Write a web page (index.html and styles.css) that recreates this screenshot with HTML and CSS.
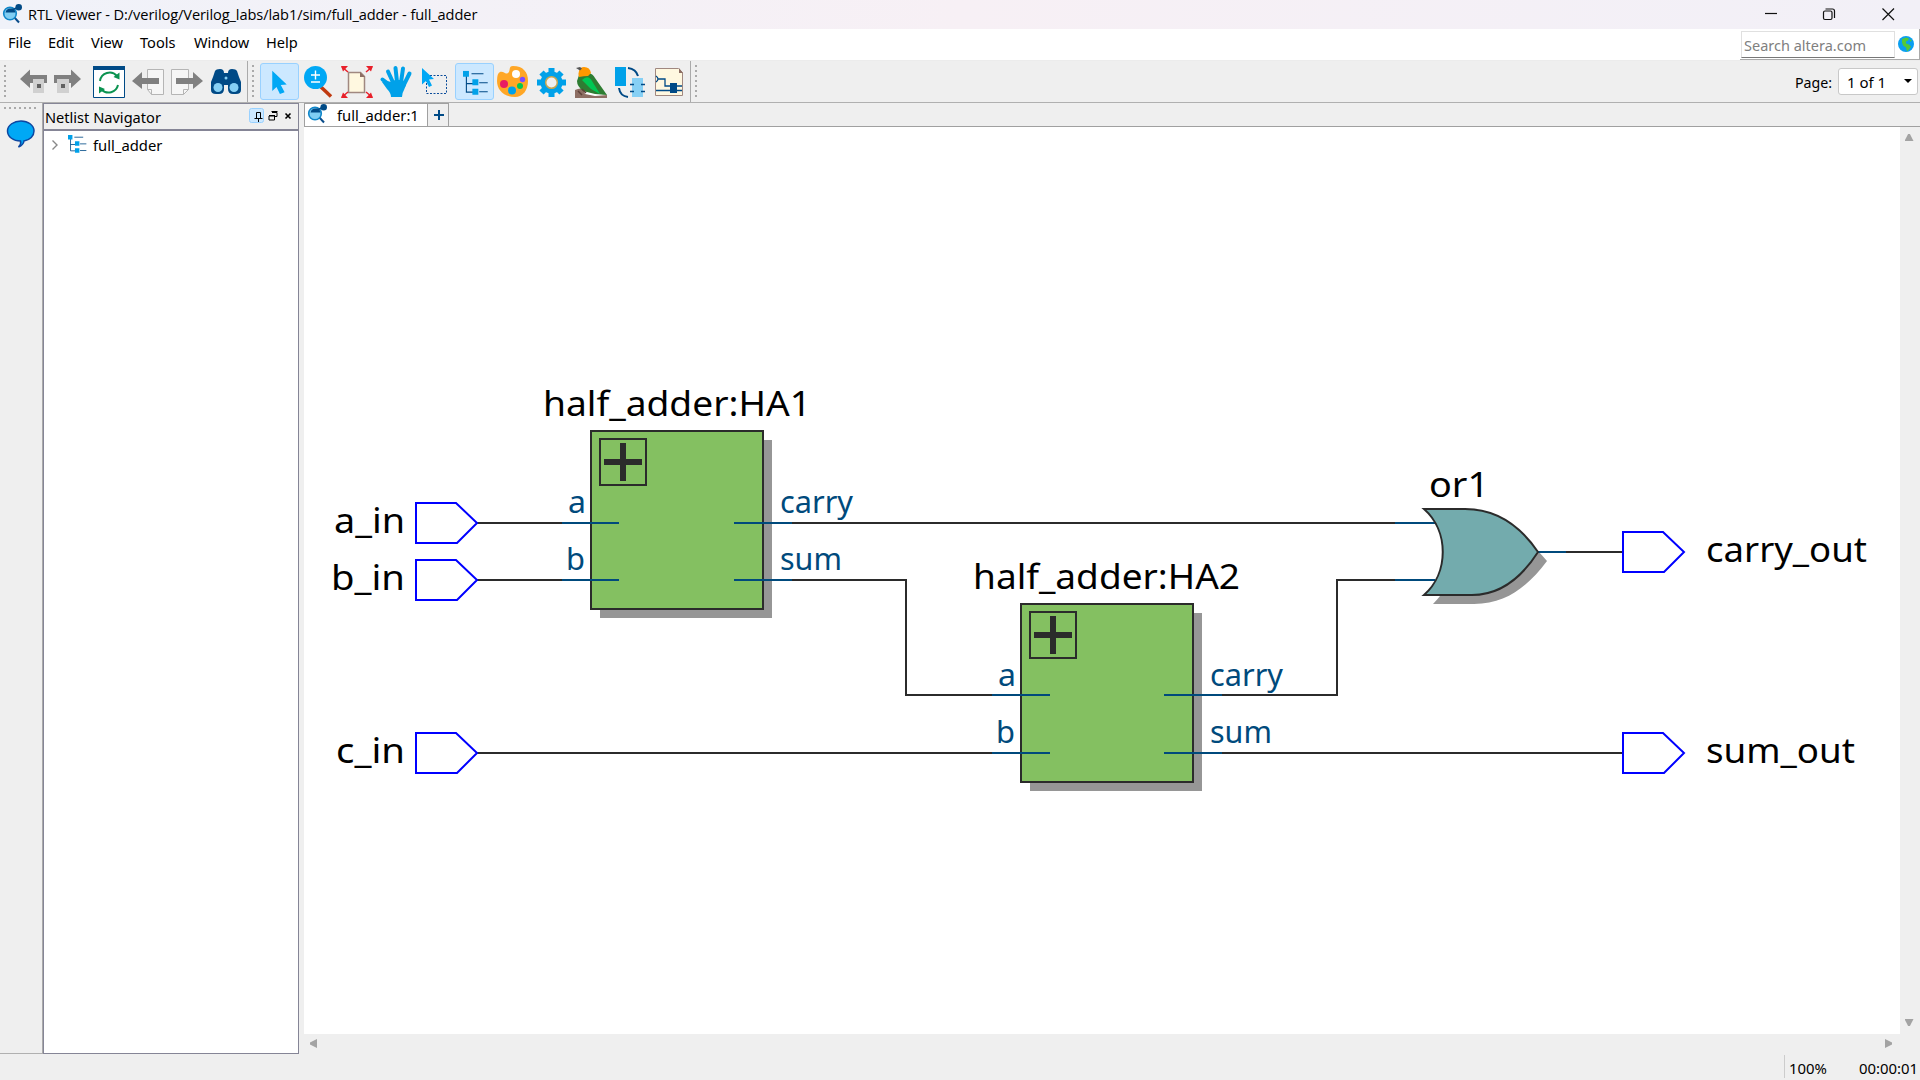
FILE: index.html
```html
<!DOCTYPE html>
<html lang="en">
<head>
<meta charset="utf-8">
<title>RTL Viewer</title>
<link rel="stylesheet" href="styles.css">
</head>
<body>
<svg class="defs" width="0" height="0">
  <defs>
    <symbol id="logo" viewBox="0 0 20 20">
      <path d="M11.500 12.500 17 18.500" stroke="#0a4c8a" stroke-width="2"/>
      <circle cx="8" cy="9.500" r="6.300" fill="#7fcdf3" stroke="#0f86c9" stroke-width="1.600"/>
      <path d="M3.500 8.500A5 5 0 0 1 8 4.500h4l1.500 4z" fill="#004a86"/>
      <path d="M12 5l5-2" stroke="#004a86" stroke-width="1.500"/>
      <circle cx="16.700" cy="3.300" r="3.300" fill="#004a86"/>
    </symbol>
    <symbol id="tree" viewBox="0 0 30 30">
      <path d="M4 5v20h10M4 15h10M10 3.500h14M19 14h10M19 24.500h10" fill="none" stroke="#004a86" stroke-width="1.300"/>
      <path d="M0 0h7v7H0zM11 10h7v7h-7zM11 21h7v7h-7z" fill="#00a1e9"/>
    </symbol>
    <g id="port"><path d="M0-20H40L61 0 41 20H0z" fill="#fff" stroke="#00f" stroke-width="2"/></g>
    <g id="block">
      <path d="M9 9h172v178H9z" fill="#969696"/>
      <path d="M0 0h172v178H0z" fill="#84c061" stroke="#2b2b2b" stroke-width="2"/>
      <path d="M9 8h46v46H9z" fill="none" stroke="#2b2b2b" stroke-width="2"/>
      <path d="M13 31h38M32 12v38" stroke="#2b2b2b" stroke-width="6"/>
    </g>
  </defs>
</svg>
<div class="window">
  <header class="titlebar">
    <svg class="logo" width="20" height="20"><use href="#logo"/></svg>
    <span class="title">RTL Viewer - D:/verilog/Verilog_labs/lab1/sim/full_adder - full_adder</span>
    <svg class="controls" width="152" height="29" fill="none" stroke="#111" stroke-width="1.200">
      <path d="M17 13.500h12"/>
      <rect x="75.500" y="11" width="8.500" height="8.500" rx="1.500"/><path d="M77.500 9h7q2 0 2 2v7"/>
      <path d="M134.500 8.500 146 20M146 8.500 134.500 20"/>
    </svg>
  </header>
  <nav class="menubar">
    <span class="m1">File</span><span class="m2">Edit</span><span class="m3">View</span><span class="m4">Tools</span><span class="m5">Window</span><span class="m6">Help</span>
    <div class="search"><span class="field">Search altera.com</span>
      <svg width="16" height="16"><circle cx="8" cy="8" r="8" fill="#0a9ff0"/><path d="M4 3l4-1.500 3 1-1 2-2 1v2l3 1 2 2-2 3-2 2-1-4-3-2-1-3zM12 3l2 2-2 .5z" fill="#53c83a"/></svg>
    </div>
  </nav>
  <div class="toolbar">
    <i class="grip"></i>
    <div class="group first">
      <svg viewBox="12 61 39 41"><path d="M20 79l10-9.500V75h17v8H30v5z" fill="#808080"/><path d="M33 79h11v14H33z" fill="#d0d0d0"/><path d="M37 84h4v4h-4z" fill="#606060"/></svg>
      <svg viewBox="51 61 39 41"><path d="M81 79l-10-9.500V75H54v8h17v5z" fill="#808080"/><path d="M57 79h12v14H57z" fill="#d0d0d0"/><path d="M61 84h4v4h-4z" fill="#606060"/></svg>
      <svg viewBox="90 61 39 41"><path d="M93.500 66.500h31v31h-31z" fill="#fff" stroke="#004a86"/><path d="M93 66h32v4H93z" fill="#004a86"/><path d="M100 81a9.700 9.700 0 0 1 17-5M118 85a9.700 9.700 0 0 1-16.500 4.500" fill="none" stroke="#0b9350" stroke-width="2"/><path d="M119.500 72.500v7l-6-2.500zM99 93.500v-7l6 2.500z" fill="#0b9350"/></svg>
      <svg viewBox="129 61 39 41"><path d="M147.500 69.500h16v25h-12l-4-5z" fill="#f6f6f6" stroke="#b5b5b5"/><path d="M147.500 89.500h4v5" fill="none" stroke="#b5b5b5"/><path d="M132 81l10-9v6h17v6h-17v5z" fill="#808080"/></svg>
      <svg viewBox="168 61 39 41"><path d="M171.500 69.500h17v20l-5 5h-12z" fill="#f6f6f6" stroke="#b5b5b5"/><path d="M188.500 89.500h-5v5" fill="none" stroke="#b5b5b5"/><path d="M203 81l-10-9v6h-17v6h17v5z" fill="#808080"/></svg>
      <svg viewBox="207 61 39 41"><path d="M213 77l2-6q1-2 5-2t4 4h4q0-4 4-4t5 2l2 6 2 5v8q0 4-5 4h-3q-5 0-5-5v-4h-4v4q0 5-5 5h-3q-5 0-5-4v-8z" fill="#004a86"/><circle cx="218" cy="87.500" r="4.500" fill="#86d0f5"/><circle cx="234" cy="87.500" r="4.500" fill="#86d0f5"/><circle cx="226" cy="78" r="1.500" fill="#86d0f5"/></svg>
    </div>
    <i class="grip"></i>
    <div class="group second">
      <svg class="on" viewBox="260 61 39 41"><path d="M271 69l17 16-7 .5 4.500 8.500-5.500 2-4-8-5 4.500z" fill="#00a8f5"/></svg>
      <svg viewBox="299 61 39 41"><path d="M321 87l10 9.500" stroke="#c03a10" stroke-width="3.500"/><circle cx="315.500" cy="77.500" r="11.500" fill="#00a8f5"/><path d="M311 75h9M315.500 70.500v9M311 82h9" stroke="#fff" stroke-width="1.400"/></svg>
      <svg viewBox="338 61 39 41"><path d="M348.500 72.500h12l4 4v16h-16z" fill="#fff8e0" stroke="#a08880" stroke-width="1.500"/><path d="M360 72v5h5z" fill="#8d6e63"/><path d="M342 67l6 5M372 67l-6 5M342 97l6-5M372 97l-6-5" stroke="#e8202a" stroke-width="1.500"/><path d="M341 66h7l-5 5.500zM373 66h-7l5 5.500zM341 98h7l-5-5.500zM373 98h-7l5-5.500z" fill="#e8202a"/></svg>
      <svg viewBox="377 61 39 41"><path d="M382.500 79.500l8 6M388 71.500l5.500 12M395.500 68l1.500 14M403 68.500l-2 14M409.500 73.500l-6 12" stroke="#00a1e9" stroke-width="4" stroke-linecap="round"/><path d="M386 81l6 1 3-2h7l3 2 1 3-2 5q-2 3-2 7h-11q0-4-4-8l-5-7z" fill="#00a1e9"/></svg>
      <svg viewBox="416 61 39 41"><path d="M426.500 75.500h20v18h-20z" fill="none" stroke="#0a4c9a" stroke-dasharray="2 1.500"/><path d="M422 68l12 11-5 .5 3 6-3 1.500-3-6-4 3.500z" fill="#00a8f5"/></svg>
      <svg class="on" viewBox="455 61 39 41"><use href="#tree" x="461" y="69" width="30" height="30"/></svg>
      <svg viewBox="494 61 39 41"><path d="M513 66c10 0 15 6 15 15s-5 16-13 16c-12 0-18-8-18-16q0-8 3-9c4-1 5 3 8 1s0-7 5-7z" fill="#ffa726"/><circle cx="516" cy="74" r="4" fill="#fff"/><circle cx="504" cy="84" r="4" fill="#e91e63"/><circle cx="522.500" cy="79.500" r="2.700" fill="#7c4dff"/><circle cx="520" cy="86" r="3" fill="#00c853"/><circle cx="512" cy="90.500" r="4" fill="#00a1e9"/></svg>
      <svg viewBox="533 61 39 41"><g stroke="#00a1e9" stroke-width="6"><path d="M551.500 68v29M537 82.500h29M541.500 72.500l20 20M561.500 72.500l-20 20"/></g><circle cx="551.500" cy="82.500" r="11" fill="#00a1e9"/><circle cx="551.500" cy="82.500" r="5.800" fill="#f0f0f0" stroke="#c9a54e" stroke-width="1.500"/></svg>
      <svg viewBox="572 61 39 41"><path d="M575 90q6-3 10 0l22 5v3h-32z" fill="#8d6e63"/><path d="M584 91l23 4-12 1-10-2z" fill="#fff"/><path d="M579 75l10-2q4 1 6 5l12 17-12-1-12-3q-6-5-6-10z" fill="#2e7d32"/><path d="M582 80q6-6 10 1l8 13-9-5z" fill="#00c853"/><path d="M579 77q-1-4 0-6 1-4 5-4 6 0 7 6l-3 3q-4 0-9 1z" fill="#ff9800"/><path d="M576 68l4-1 2 1.500-2 2z" fill="#555"/><path d="M578 91l4 4m0-6 4 4" stroke="#5d4037" stroke-width="1.500"/></svg>
      <svg viewBox="611 61 39 41"><path d="M615 67h11v19h-11z" fill="#00a1e9"/><path d="M632 78h11v19h-11z" fill="#86d0f5"/><path d="M628 68q8 1 10 8M619 88q1 8 9 9" fill="none" stroke="#004a86" stroke-width="2"/><path d="M630 84.500h4M630 91.500h4M641 84.500h4M641 91.500h4" stroke="#004a86" stroke-width="1.500"/></svg>
      <svg viewBox="650 61 39 41"><path d="M655.500 68.500h23l4 4v23h-27z" fill="#fff8e0" stroke="#a08880"/><path d="M679 68v5h4z" fill="#8d6e63"/><path d="M656 76q4 3 0 6M658 79h7v7h5M675 86h7M656 90.500h14M675 90.500h7" fill="none" stroke="#004a86" stroke-width="1.300"/><path d="M670 83h7v10h-7z" fill="#004a86"/></svg>
    </div>
    <i class="grip"></i>
    <label class="page">Page: <span class="select">1 of 1<b></b></span></label>
  </div>
  <main class="body">
    <aside class="rail"><i class="hgrip"></i>
      <svg width="30" height="30" viewBox="6 119 30 30"><path d="M24 141c6-1 10-5 10-10 0-6-6-10-13-10s-13.500 4-13.500 10 6 10 13 10q1 3-2 6 5-2 5.500-6z" fill="#00a8f5" stroke="#0d47a1" stroke-width="1.500"/></svg>
    </aside>
    <section class="navigator">
      <div class="navhead"><span>Netlist Navigator</span>
        <svg width="46" height="16" fill="none" stroke="#000">
          <rect x=".5" y=".5" width="14" height="14" rx="2" fill="#cce8ff" stroke="#99d1ff"/><path d="M7.500 10V4.500h4V10M5.500 10.500h8M9.500 10v4"/>
          <path d="M23 4.500h5v4h-2M22.500 3.500h6" /><path d="M20 8h5.500v4H20zM20 7.500h6"/>
          <path d="M36.500 5.500l5 5M41.500 5.500l-5 5" stroke-width="1.600"/>
        </svg>
      </div>
      <div class="navtree"><svg width="8" height="12"><path d="M1.500 1.500 6 6 1.500 10.500" fill="none" stroke="#888" stroke-width="1.400"/></svg>
        <svg class="ticon" width="19" height="19"><use href="#tree"/></svg><span>full_adder</span></div>
    </section>
    <section class="view">
      <div class="tabs"><div class="tab"><svg width="20" height="20"><use href="#logo"/></svg><span>full_adder:1</span></div><div class="add"><svg width="10" height="10"><path d="M5 0v10M0 5h10" stroke="#004a86" stroke-width="2"/></svg></div></div>
      <div class="work">
        <svg class="schematic" viewBox="304 127 1596 907" width="1596" height="907">
          <use href="#block" x="591" y="431"/><use href="#block" x="1021" y="604"/>
          <path d="M1433 518h32c34 0 62 18 82 43-19 25-40 43-73 43h-41c25-24 25-62 0-86z" fill="#969696"/>
          <g class="wire">
            <path d="M477 523H562M477 580H562M792 523H1395M792 580H906V695H992M1222 695H1337V580H1395M477 753H992M1222 753H1623M1566 552H1623"/>
            <path class="pin" d="M562 523H619M562 580H619M734 523H792M734 580H792M992 695H1050M992 753H1050M1164 695H1222M1164 753H1222M1395 523H1436M1395 580H1435M1538 552H1566"/>
          </g>
          <path d="M1424 509h41c32 0 56 18 73 43-16 25-37 43-66 43h-48c25-22 25-64 0-86z" fill="#73abad" stroke="#2b2b2b" stroke-width="2"/>
          <use href="#port" x="416" y="523"/><use href="#port" x="416" y="580"/><use href="#port" x="416" y="753"/>
          <use href="#port" x="1623" y="552"/><use href="#port" x="1623" y="753"/>
          <g class="name">
            <text x="543" y="416" textLength="268" lengthAdjust="spacingAndGlyphs">half_adder:HA1</text><text x="973" y="589" textLength="267" lengthAdjust="spacingAndGlyphs">half_adder:HA2</text>
            <text x="334" y="533" textLength="71" lengthAdjust="spacingAndGlyphs">a_in</text><text x="331" y="590" textLength="74" lengthAdjust="spacingAndGlyphs">b_in</text><text x="336" y="763" textLength="69" lengthAdjust="spacingAndGlyphs">c_in</text>
            <text x="1429" y="497" textLength="60" lengthAdjust="spacingAndGlyphs">or1</text><text x="1706" y="562" textLength="161" lengthAdjust="spacingAndGlyphs">carry_out</text><text x="1706" y="763" textLength="149" lengthAdjust="spacingAndGlyphs">sum_out</text>
          </g>
          <g class="pinname">
            <text x="568" y="513" textLength="18" lengthAdjust="spacingAndGlyphs">a</text><text x="566" y="570" textLength="19" lengthAdjust="spacingAndGlyphs">b</text><text x="780" y="513" textLength="73" lengthAdjust="spacingAndGlyphs">carry</text><text x="780" y="570" textLength="62" lengthAdjust="spacingAndGlyphs">sum</text>
            <text x="998" y="686" textLength="18" lengthAdjust="spacingAndGlyphs">a</text><text x="996" y="743" textLength="19" lengthAdjust="spacingAndGlyphs">b</text><text x="1210" y="686" textLength="73" lengthAdjust="spacingAndGlyphs">carry</text><text x="1210" y="743" textLength="62" lengthAdjust="spacingAndGlyphs">sum</text>
          </g>
        </svg>
        <div class="vscroll"><i class="up"></i><i class="down"></i></div>
      </div>
      <div class="hscroll"><i class="left"></i><i class="right"></i></div>
    </section>
  </main>
  <footer class="status"><span class="zoom">100%</span><span>00:00:01</span></footer>
</div>
</body>
</html>
```
FILE: styles.css
```css
* { box-sizing: border-box; }
body { margin: 0; background: #efefef; color: #000; font: 14.600px/20px "Noto Sans", sans-serif; }
.defs { display: block; }
.window { width: 1920px; height: 1080px; display: flex; flex-direction: column; overflow: hidden; white-space: nowrap; }
svg { flex: none; display: block; }

.titlebar { height: 29px; display: flex; padding-right: 20px; background: linear-gradient(90deg, #f0f2f9, #f7f0f5 50%, #f2f0f7); }
.logo { margin: 4px 6px 0 2px; }
.title { font: 14.600px/29px "Open Sans", sans-serif; letter-spacing: -0.090px; }
.controls { margin-left: auto; }

.menubar { height: 32px; background: #fff; border-bottom: 1px solid #ececec; display: flex; padding-left: 8px; line-height: 26px; }
.m1 { width: 40px; } .m2 { width: 43px; } .m3 { width: 49px; } .m4 { width: 54px; } .m5 { width: 72px; }
.search { margin-left: auto; display: flex; width: 180px; height: 31px; border-right: 1px solid #aaa; border-bottom: 1px solid #aaa; }
.search svg { margin: 7px 0 0 3px; }
.field { width: 154px; height: 27px; margin: 2px 0 0 1px; padding: 0 2px; border: 1px solid #e0e0e0; border-bottom-color: #777; color: #808080; font-size: 14.500px; line-height: 27px; }

.toolbar { height: 42px; display: flex; background: #efefef; border-bottom: 1px solid #b0b0b0; }
.grip { width: 3px; height: 35px; margin: 4px 0 0 4px; background: radial-gradient(circle at 1px 1px, #aaa 1px, transparent 1.500px) 0 0/3px 5px; }
.group { display: flex; border-right: 1px solid #aaa; }
.group svg { width: 39px; height: 41px; }
.first { margin-left: 5px; width: 236px; }
.second { margin-left: 5px; width: 431px; }
.group .on { background: #cce8ff; border: 1px solid #99d1ff; border-radius: 3px; height: 37px; margin-top: 2px; }
.page { margin-left: auto; display: flex; gap: 6px; padding: 7px 2px 0 0; font-size: 14.200px; line-height: 29px; }
.select { width: 80px; height: 27px; padding: 0 5px 0 8px; border: 1px solid #c8c8c8; border-radius: 3px; background: #fff; display: flex; justify-content: space-between; font-size: 15px; line-height: 27px; }
.select b { margin-top: 10px; width: 0; height: 4px; border: 4px solid transparent; border-top-color: #000; }

.body { flex: 1; min-height: 0; display: flex; }
.rail { width: 43px; height: 951px; border-right: 1px solid #aaa; border-bottom: 1px solid #b0b0b0; }
.hgrip { display: block; width: 35px; height: 3px; margin: 4px 0 9px 4px; background: radial-gradient(circle at 1px 1px, #aaa 1px, transparent 1.500px) 0 0/5px 3px; }
.rail svg { margin-left: 6px; }
.navigator { width: 256px; height: 951px; border: 1px solid #858596; background: #fff; }
.navhead { height: 27px; background: #efefef; border-bottom: 2px solid #858596; display: flex; justify-content: space-between; padding: 4px 3px 0 1px; line-height: 19px; }
.navtree { display: flex; height: 27px; align-items: center; padding-left: 7px; font-size: 14.800px; line-height: 18px; }
.ticon { margin: 0 6px 0 9px; }
.view { width: 1616px; margin-left: 5px; display: flex; flex-direction: column; }
.tabs { height: 24px; border-bottom: 1px solid #a0a0a0; display: flex; }
.tab { width: 124px; height: 23px; background: #fff; border: solid #a0a0a0; border-width: 1px 1px 0 1px; display: flex; line-height: 23px; font-size: 14.800px; }
.tab svg { margin: 0 10px 0 2px; }
.add { width: 21px; height: 23px; padding-left: 1px; border: 1px solid #a0a0a0; border-width: 1px 1px 0 0; display: grid; place-items: center; }
.work { height: 907px; background: #fff; display: flex; }
.wire path { fill: none; stroke: #2b2b2b; stroke-width: 2; }
.wire .pin { stroke: #004a7c; }
.name { font-size: 35px; }
.pinname { font-size: 30px; fill: #004a7c; }
.vscroll { width: 20px; background: #efefef; display: flex; flex-direction: column; justify-content: space-between; align-items: center; padding: 7px 2px 8px 0; }
.hscroll { height: 19px; display: flex; justify-content: space-between; padding: 5px 28px 0 6px; }
.vscroll i, .hscroll i { background: #a3a3a3; width: 9px; height: 7px; }
.hscroll i { width: 7px; height: 9px; }
.up { clip-path: polygon(40% 0, 60% 0, 100% 100%, 0 100%); }
.down { clip-path: polygon(0 0, 100% 0, 60% 100%, 40% 100%); }
.left { clip-path: polygon(100% 0, 100% 100%, 0 60%, 0 40%); }
.right { clip-path: polygon(0 0, 100% 40%, 100% 60%, 0 100%); }

.status { height: 25px; display: flex; justify-content: flex-end; line-height: 27px; font-size: 14.900px; padding-right: 2px; }
.zoom { width: 75px; border-left: 1px solid #ccc; padding-left: 4px; margin-bottom: 2px; }
```
